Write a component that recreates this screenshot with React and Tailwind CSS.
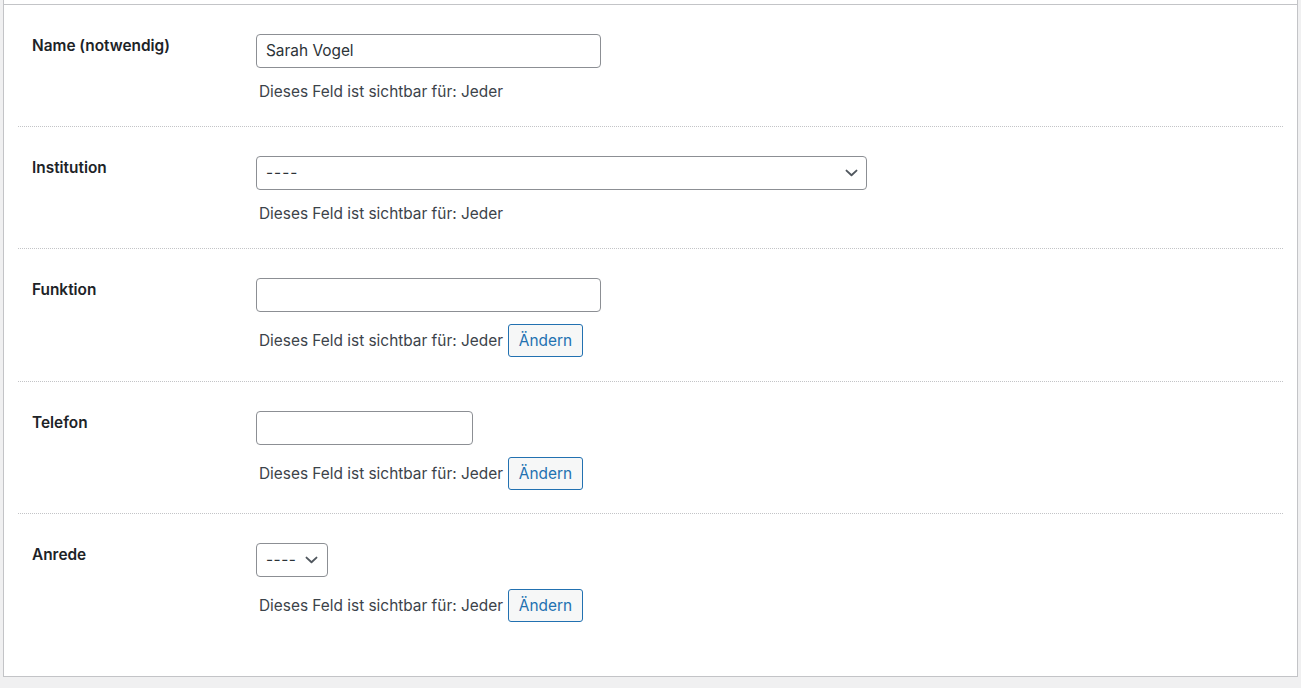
import React from "react";

const font = { fontFamily: "Inter, 'Noto Sans', 'Liberation Sans', sans-serif" };

function Chevron() {
  return (
    <svg width="13" height="8" viewBox="0 0 13 8" className="shrink-0">
      <path d="M1.5 1.6 L6.5 6.2 L11.5 1.6" fill="none" stroke="#50575e" strokeWidth="1.9" strokeLinecap="round" strokeLinejoin="round" />
    </svg>
  );
}

function TextField({ value, width }) {
  return (
    <div className={`${width} h-[34px] border border-[#8c8f94] rounded-[4px] bg-white flex items-center px-[9px] text-[15.4px] text-[#2c3338]`}>
      {value}
    </div>
  );
}

function SelectField({ width }) {
  return (
    <div className={`${width} h-[34px] border border-[#8c8f94] rounded-[4px] bg-white flex items-center justify-between pl-[9px] pr-[8px] text-[15.4px] text-[#2c3338]`}>
      <span className="tracking-[1px] whitespace-nowrap">----</span>
      <Chevron />
    </div>
  );
}

function Visibility({ editable }) {
  return (
    <div className={`mt-[12px] flex items-center pl-[3px] text-[15.4px] text-[#3c434a] ${editable ? "h-[33px]" : "h-[22px] pt-[2px]"}`}>
      <span className="whitespace-nowrap">Dieses Feld ist sichtbar für: Jeder</span>
      {editable && (
        <button className="ml-[5px] h-[33px] w-[75px] rounded-[3px] border border-[#2271b1] bg-[#f6f7f7] text-[#2271b1] text-[15.4px]">
          Ändern
        </button>
      )}
    </div>
  );
}

function Row({ label, first, bottom, children }) {
  return (
    <div className={`flex ${first ? "pt-[29px]" : "border-t border-dotted border-[#c3c4c7] pt-[29px]"} ${bottom}`}>
      <div className="w-[238px] shrink-0 pl-[14px] pt-px leading-[22px] text-[15.4px] font-semibold text-[#1d2327]">{label}</div>
      <div className="flex flex-col items-start">{children}</div>
    </div>
  );
}

export default function App() {
  return (
    <div className="w-[1301px] h-[688px] bg-[#f0f0f1] px-[3px] overflow-hidden" style={font}>
      <div className="h-[677px] bg-white border-x border-b border-[#c3c4c7] flex flex-col">
        <div className="h-[4px]" />
        <div className="h-px bg-[#c3c4c7]" />
        <div className="px-[14px]">
          <Row label="Name (notwendig)" first bottom="pb-[24px]">
            <TextField value="Sarah Vogel" width="w-[345px]" />
            <Visibility />
          </Row>
          <Row label="Institution" bottom="pb-[24px]">
            <SelectField width="w-[611px]" />
            <Visibility />
          </Row>
          <Row label="Funktion" bottom="pb-[24px]">
            <TextField value="" width="w-[345px]" />
            <Visibility editable />
          </Row>
          <Row label="Telefon" bottom="pb-[23px]">
            <TextField value="" width="w-[217px]" />
            <Visibility editable />
          </Row>
          <Row label="Anrede" bottom="pb-[54px]">
            <div className="w-[72px] h-[34px] border border-[#8c8f94] rounded-[4px] bg-white flex items-center justify-between pl-[9px] pr-[9px] text-[15.4px] text-[#2c3338]">
              <span className="tracking-[0.5px] whitespace-nowrap">----</span>
              <Chevron />
            </div>
            <Visibility editable />
          </Row>
        </div>
      </div>
    </div>
  );
}
